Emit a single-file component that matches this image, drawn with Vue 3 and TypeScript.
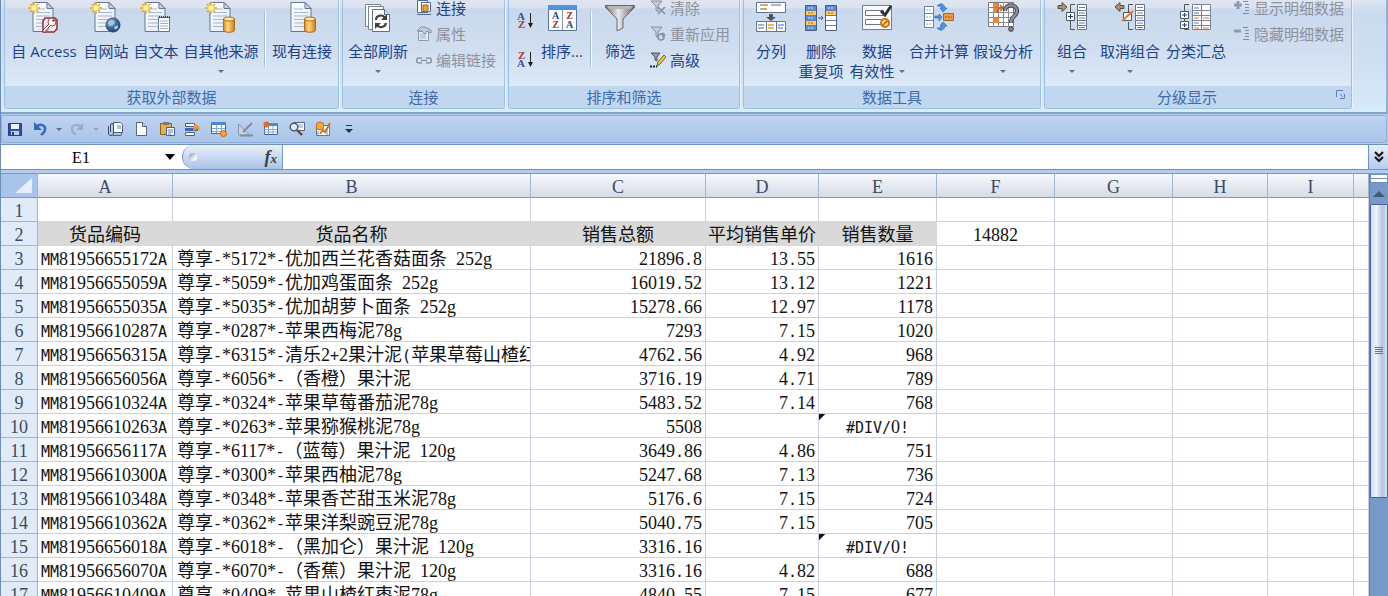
<script setup lang="ts">
import { ref } from 'vue'

interface Command {
  icon: string
  lines: string[]
  size: string
  menu?: 'inline' | 'below'
}
interface SmallCommand {
  icon: string
  label: string
  disabled?: boolean
}
type Section =
  | { kind: 'big'; items: Command[] }
  | { kind: 'small'; items: SmallCommand[] }
  | { kind: 'icons'; items: { icon: string; label: string }[] }
  | { kind: 'rule' }
interface Group {
  id: string
  title: string
  launcher?: boolean
  sections: Section[]
}

const groups: Group[] = [
  {
    id: 'external',
    title: '获取外部数据',
    sections: [
      {
        kind: 'big',
        items: [
          { icon: 'access', lines: ['自 Access'], size: 'w74' },
          { icon: 'web', lines: ['自网站'], size: 'w50' },
          { icon: 'text', lines: ['自文本'], size: 'w50' },
          { icon: 'source', lines: ['自其他来源'], size: 'w80', menu: 'below' },
        ],
      },
      { kind: 'rule' },
      { kind: 'big', items: [{ icon: 'existing', lines: ['现有连接'], size: 'w66' }] },
    ],
  },
  {
    id: 'connect',
    title: '连接',
    sections: [
      { kind: 'big', items: [{ icon: 'refresh', lines: ['全部刷新'], size: 'w66', menu: 'below' }] },
      {
        kind: 'small',
        items: [
          { icon: 'conn', label: '连接' },
          { icon: 'props', label: '属性', disabled: true },
          { icon: 'links', label: '编辑链接', disabled: true },
        ],
      },
    ],
  },
  {
    id: 'sort',
    title: '排序和筛选',
    sections: [
      {
        kind: 'icons',
        items: [
          { icon: 'asc', label: '升序' },
          { icon: 'desc', label: '降序' },
        ],
      },
      { kind: 'big', items: [{ icon: 'sort', lines: ['排序...'], size: 'w50' }] },
      { kind: 'rule' },
      { kind: 'big', items: [{ icon: 'filter', lines: ['筛选'], size: 'w50' }] },
      {
        kind: 'small',
        items: [
          { icon: 'clear', label: '清除', disabled: true },
          { icon: 'reapply', label: '重新应用', disabled: true },
          { icon: 'advanced', label: '高级' },
        ],
      },
    ],
  },
  {
    id: 'tools',
    title: '数据工具',
    sections: [
      {
        kind: 'big',
        items: [
          { icon: 'columns', lines: ['分列'], size: 'w50' },
          { icon: 'dedupe', lines: ['删除', '重复项'], size: 'w50' },
          { icon: 'valid', lines: ['数据', '有效性'], size: 'w62', menu: 'inline' },
          { icon: 'merge', lines: ['合并计算'], size: 'w62' },
          { icon: 'whatif', lines: ['假设分析'], size: 'w66', menu: 'below' },
        ],
      },
    ],
  },
  {
    id: 'outline',
    title: '分级显示',
    launcher: true,
    sections: [
      {
        kind: 'big',
        items: [
          { icon: 'group', lines: ['组合'], size: 'w50', menu: 'below' },
          { icon: 'ungroup', lines: ['取消组合'], size: 'w66', menu: 'below' },
          { icon: 'subtotal', lines: ['分类汇总'], size: 'w66' },
        ],
      },
      {
        kind: 'small',
        items: [
          { icon: 'show', label: '显示明细数据', disabled: true },
          { icon: 'hide', label: '隐藏明细数据', disabled: true },
        ],
      },
    ],
  },
]

const quick = [
  { icon: 'q-mail', label: '电子邮件' },
  { icon: 'q-new', label: '新建' },
  { icon: 'q-paste', label: '粘贴' },
  { icon: 'q-insert', label: '插入行' },
  { icon: 'q-table', label: '表格' },
  { icon: 'q-design', label: '设计模式' },
  { icon: 'q-pivot', label: '数据透视表' },
  { icon: 'q-preview', label: '打印预览' },
  { icon: 'q-chart', label: '照相机' },
]

const letters = ['A', 'B', 'C', 'D', 'E', 'F', 'G', 'H', 'I', '']
const titles = ['货品编码', '货品名称', '销售总额', '平均销售单价', '销售数量']

const data: string[][] = [
  ['MM81956655172A', '尊享-*5172*-优加西兰花香菇面条 252g', '21896.8', '13.55', '1616'],
  ['MM81956655059A', '尊享-*5059*-优加鸡蛋面条 252g', '16019.52', '13.12', '1221'],
  ['MM81956655035A', '尊享-*5035*-优加胡萝卜面条 252g', '15278.66', '12.97', '1178'],
  ['MM81956610287A', '尊享-*0287*-苹果西梅泥78g', '7293', '7.15', '1020'],
  ['MM81956656315A', '尊享-*6315*-清乐2+2果汁泥(苹果草莓山楂红', '4762.56', '4.92', '968'],
  ['MM81956656056A', '尊享-*6056*-（香橙）果汁泥', '3716.19', '4.71', '789'],
  ['MM81956610324A', '尊享-*0324*-苹果草莓番茄泥78g', '5483.52', '7.14', '768'],
  ['MM81956610263A', '尊享-*0263*-苹果猕猴桃泥78g', '5508', '', '#DIV/0!'],
  ['MM81956656117A', '尊享-*6117*-（蓝莓）果汁泥 120g', '3649.86', '4.86', '751'],
  ['MM81956610300A', '尊享-*0300*-苹果西柚泥78g', '5247.68', '7.13', '736'],
  ['MM81956610348A', '尊享-*0348*-苹果香芒甜玉米泥78g', '5176.6', '7.15', '724'],
  ['MM81956610362A', '尊享-*0362*-苹果洋梨豌豆泥78g', '5040.75', '7.15', '705'],
  ['MM81956656018A', '尊享-*6018*-（黑加仑）果汁泥 120g', '3316.16', '', '#DIV/0!'],
  ['MM81956656070A', '尊享-*6070*-（香蕉）果汁泥 120g', '3316.16', '4.82', '688'],
  ['MM81956610409A', '尊享-*0409*-苹果山楂红枣泥78g', '4840.55', '7.15', '677'],
]

interface Run {
  text: string
  face: 'num' | 'mono' | 'han'
}

// Every half-width character takes half of a full-width one, whichever face draws it.
function runs(text: string): Run[] {
  const out: Run[] = []
  for (const ch of text) {
    const face = /[0-9*g]/.test(ch) ? 'num' : ch.charCodeAt(0) < 128 ? 'mono' : 'han'
    const last = out[out.length - 1]
    if (last && last.face === face) last.text += ch
    else out.push({ text: ch, face })
  }
  return out
}

const cellName = ref('E1')
const formula = ref('')
</script>

<template>
  <svg class="defs" width="0" height="0" aria-hidden="true">
    <defs>
      <linearGradient id="g-db" x1="0" x2="1" y1="0" y2="0">
        <stop offset="0" stop-color="#d98a1c" /><stop offset=".4" stop-color="#ffd98a" /><stop offset="1" stop-color="#d07a10" />
      </linearGradient>
      <linearGradient id="g-steel" x1="0" x2="1" y1="0" y2="0">
        <stop offset="0" stop-color="#6f6f72" /><stop offset=".45" stop-color="#e8e8ea" /><stop offset="1" stop-color="#66666a" />
      </linearGradient>
      <radialGradient id="g-globe" cx=".35" cy=".3" r=".8">
        <stop offset="0" stop-color="#a8cdf0" /><stop offset=".5" stop-color="#3e6ca8" /><stop offset="1" stop-color="#18304f" />
      </radialGradient>
      <linearGradient id="g-page" x1="0" x2="1" y1="0" y2="1">
        <stop offset="0" stop-color="#fff" /><stop offset="1" stop-color="#dfe8f4" />
      </linearGradient>

      <symbol id="page" viewBox="0 0 32 32">
        <path d="M5 .5h14l6 6v23H5z" fill="url(#g-page)" stroke="#66788f" />
        <path d="M19 .5v6h6z" fill="#c8d4e4" stroke="#66788f" />
        <path d="M8 7h9M8 10.500h14M8 14h14M8 17.500h14M8 21h14M8 24.500h14" stroke="#a7b8cf" />
      </symbol>
      <symbol id="spark" viewBox="0 0 32 32">
        <path d="M6 0v12M0 6h12M2 2l8 8M10 2l-8 8" stroke="#e5a91d" stroke-width="1.600" />
        <circle cx="6" cy="6" r="3.200" fill="#fff4a8" stroke="#f0c840" />
      </symbol>
      <symbol id="drum" viewBox="0 0 32 32">
        <path d="M18.500 17v11c0 3 11 3 11 0V17z" fill="url(#g-db)" stroke="#b06c12" />
        <ellipse cx="24" cy="17" rx="5.500" ry="2" fill="#ffe3a0" stroke="#b06c12" />
      </symbol>

      <symbol id="i-access" viewBox="0 0 32 32">
        <use href="#page" width="32" height="32" /><use href="#spark" width="32" height="32" />
        <path d="M17 16h10l2 2v9l-3 3H15v-11z" fill="#f7e9ea" stroke="#8e3038" stroke-width="1.500" />
        <circle cx="24" cy="20" r="4" fill="#fff" stroke="#a04850" /><circle cx="25.500" cy="18.500" r="1.200" fill="#8e3038" />
        <path d="M21 22l-6 6v2h3v-2h2v-2l3-3" fill="#fff" stroke="#983840" />
      </symbol>
      <symbol id="i-web" viewBox="0 0 32 32">
        <use href="#page" width="32" height="32" /><use href="#spark" width="32" height="32" />
        <circle cx="23" cy="23" r="7" fill="url(#g-globe)" stroke="#334c6c" />
        <path d="M18 20l4-2 3 2-2 3-4 1zM24 25l4-2v3l-3 2z" fill="#a9c6d8" />
      </symbol>
      <symbol id="i-text" viewBox="0 0 32 32">
        <use href="#page" width="32" height="32" /><use href="#spark" width="32" height="32" />
        <path d="M18.500 15.500h11v14h-11z" fill="#fff" stroke="#64748b" />
        <path d="M19 15h11" stroke="#38475c" stroke-width="2" stroke-dasharray="1 1" />
        <path d="M20 19h8M20 21.500h8M20 24h8M20 26.500h8" stroke="#9ab0cb" />
      </symbol>
      <symbol id="i-source" viewBox="0 0 32 32">
        <use href="#page" width="32" height="32" /><use href="#spark" width="32" height="32" /><use href="#drum" width="32" height="32" />
      </symbol>
      <symbol id="i-existing" viewBox="0 0 32 32">
        <use href="#page" width="32" height="32" /><use href="#drum" width="32" height="32" />
      </symbol>
      <symbol id="i-refresh" viewBox="0 0 32 32">
        <path d="M3.500 2.500h15v22h-15z" fill="#fff" stroke="#7b8490" />
        <path d="M6.500 4.500h15v23h-15z" fill="#fff" stroke="#7b8490" />
        <path d="M10.500 7.500h12l5 5v17h-17z" fill="#fff" stroke="#666e79" />
        <path d="M22.500 7.500v5h5" fill="#dce2ea" stroke="#666e79" />
        <path d="M14 18c0-5 7-6 9-2M24 21c-1 5-7 5-9 2" fill="none" stroke="#3c4248" stroke-width="2.200" />
        <path d="M25 12v6h-6zM13 27v-6h6z" fill="#3c4248" />
      </symbol>
      <symbol id="i-sort" viewBox="0 0 32 32">
        <path d="M2.500 3.500h28v25h-28z" fill="#fff" stroke="#5b7398" />
        <path d="M2 3h29v5H2z" fill="#4f92df" /><path d="M16.500 8v20" stroke="#7f93ae" />
        <g font-family="Liberation Serif, serif" font-size="10" font-weight="700" text-anchor="middle">
          <text x="9.500" y="17" fill="#27469a">A</text><text x="9.500" y="26" fill="#96382e">Z</text>
          <text x="23.500" y="17" fill="#96382e">Z</text><text x="23.500" y="26" fill="#27469a">A</text>
        </g>
      </symbol>
      <symbol id="i-filter" viewBox="0 0 32 32">
        <path d="M1.500 3.500h29v2L19 17v9l-6 3V17L1.500 5.500z" fill="url(#g-steel)" stroke="#6a6a6e" />
        <path d="M3 4h26l-3 3H6z" fill="#b8b8bb" />
      </symbol>
      <symbol id="i-columns" viewBox="0 0 32 32">
        <path d="M1.500.5h29v10h-29zM1.500 19.500h29v10h-29z" fill="#fff" stroke="#687587" />
        <path d="M11.500 20v9M21.500 20v9" stroke="#687587" />
        <path d="M5 3h7M16 3h10M5 7h7M3 23h6M3 26h6M23 23h6M23 26h5" stroke="#3f68ac" />
        <path d="M9 3h4M7 7h5M13 23h6M13 26h6" stroke="#e79a36" stroke-width="1.500" />
        <path d="M14 12h4v3h3l-5 4-5-4h3z" fill="#4e545c" />
      </symbol>
      <symbol id="i-dedupe" viewBox="0 0 32 32">
        <path d="M.5 3.500h11v25H.5z" fill="#5b8bd6" stroke="#4a5d80" />
        <path d="M20.500 3.500h11v25h-11z" fill="#fff" stroke="#4a5d80" />
        <path d="M21 4h10v5H21z" fill="#5b8bd6" />
        <path d="M1 9h10v5H1zM1 19h10v5H1zM21 9h10v5H21z" fill="#ffca62" />
        <path d="M1 8.500h10M1 13.500h10M1 18.500h10M1 23.500h10M21 8.500h10M21 13.500h10M21 18.500h10M21 23.500h10" stroke="#6a7e9f" />
        <path d="M3 6h6M3 16h6M3 26h6M23 6h6" stroke="#dce9ff" stroke-dasharray="2 1" />
        <path d="M3 11h6M3 21h6M23 11h6" stroke="#a36b1c" stroke-dasharray="2 1" />
        <path d="M13 16h5M16 14l2 2-2 2" fill="none" stroke="#365b95" />
      </symbol>
      <symbol id="i-valid" viewBox="0 0 32 32">
        <path d="M1.500 3.500h29v24h-29z" fill="#f8f9fb" stroke="#747d8a" />
        <path d="M4.500 8.500h18v5h-18zM4.500 17.500h16v5h-16z" fill="#fff" stroke="#66778d" />
        <path d="M20 9l4 4 6-9" fill="none" stroke="#30343a" stroke-width="3" />
        <circle cx="24" cy="21" r="4" fill="#ffe2b5" stroke="#d2740e" stroke-width="2" />
        <path d="M21 24l6-6" stroke="#d2740e" stroke-width="2" />
      </symbol>
      <symbol id="i-merge" viewBox="0 0 32 32">
        <path d="M1.500 4.500h9v21h-9zM1 11.500h10M1 18.500h10" fill="#fff" stroke="#6f8097" />
        <path d="M3 8h6M3 15h6M3 22h6" stroke="#8aa8d2" stroke-dasharray="2 1" />
        <path d="M20.500 11.500h10v7h-10z" fill="#f09a42" stroke="#a9632a" /><path d="M22 15h7" stroke="#a45418" stroke-dasharray="2 1" />
        <path d="M14 4c4-4 7-2 8 2h2l-4 4-3-4h2c-1-2-3-2-5-2zM14 26c4 4 7 2 8-2h2l-4-4-3 4h2c-1 2-3 2-5 2zM12 14h4v-2l3 3-3 4v-3h-4z" fill="#4c94e6" stroke="#2b66b2" stroke-width=".700" />
      </symbol>
      <symbol id="i-whatif" viewBox="0 0 32 32">
        <path d="M1.500.5h25v24h-25z" fill="#fff" stroke="#76787d" />
        <path d="M6.500 0v25M11.500 0v25M16.500 0v25M21.500 0v25M1 5.500h25M1 10.500h25M1 15.500h25M1 20.500h25" stroke="#8a8c91" />
        <path d="M6 1h5v4H6zM6 6h5v4H6zM6 16h6v5H6z" fill="#ed8a35" />
        <path d="M10 11c0-4 3-6 6-5M13 3l3 3-3 3" fill="none" stroke="#c45c15" stroke-width="1.500" />
        <path d="M18 9c0-8 12-7 12 0 0 5-6 5-6 12" fill="none" stroke="#3f464e" stroke-width="4.200" />
        <path d="M18 9c0-8 12-7 12 0 0 5-6 5-6 12" fill="none" stroke="#8c969f" stroke-width="2.200" />
        <circle cx="24" cy="27" r="2.400" fill="#7d8790" stroke="#3f464e" />
      </symbol>
      <symbol id="rows" viewBox="0 0 32 32">
        <path d="M21.500 2.500h9v25h-9zM21 8.500h10M21 13.500h10M21 18.500h10M21 23.500h10" fill="#fff" stroke="#687385" />
        <path d="M23 5.500h6M23 11h6M23 16h6M23 21h6M23 25.500h6" stroke="#5686c8" />
      </symbol>
      <symbol id="i-group" viewBox="0 0 32 32">
        <use href="#rows" width="32" height="32" />
        <path d="M19 2.500h-4.500V11M14.500 18v9.500H19" fill="none" stroke="#555" />
        <path d="M2 3.500h4V.5L11 5 6 9.500v-3H2z" fill="#a8957c" stroke="#5b4c3b" />
        <path d="M10.500 10.500h8v8h-8z" fill="#fff" stroke="#4c5766" /><path d="M12 14.500h5M14.500 12v5" stroke="#24426f" />
      </symbol>
      <symbol id="i-ungroup" viewBox="0 0 32 32">
        <use href="#rows" width="32" height="32" />
        <path d="M19 2.500h-4.500V10M14.500 20v7.500H19" fill="none" stroke="#555" />
        <path d="M10 3.500H6V.5L1 5l5 4.500v-3h4z" fill="#a8957c" stroke="#5b4c3b" />
        <path d="M9.500 10.500h8v8h-8z" fill="#fff" stroke="#4c5766" /><path d="M8 19L19 9" stroke="#e8792d" stroke-width="2" />
      </symbol>
      <symbol id="i-subtotal" viewBox="0 0 32 32">
        <path d="M12.500 2.500h18v25h-18zM12 8.500h19M12 13.500h19M12 18.500h19M12 23.500h19M21.500 2v26" fill="#fff" stroke="#76839a" />
        <path d="M14 6h5M14 11h5M14 21h5" stroke="#4d7fc5" /><path d="M14 16h5M23 16h6M14 26h5M23 26h6" stroke="#e8792d" />
        <path d="M9 2.500H4.500v25H9" fill="none" stroke="#555" />
        <path d="M.5 9.500h8v7h-8zM.5 19.500h8v7h-8z" fill="#fff" stroke="#4c5766" /><path d="M2 13h5M4.500 11v4M2 23h5M4.500 21v4" stroke="#24426f" />
      </symbol>

      <symbol id="i-conn" viewBox="0 0 16 16">
        <path d="M1.500.5h10v12h-10z" fill="#fff" stroke="#526b90" /><path d="M5.500 2.500h9v9h-9z" fill="#fff" stroke="#526b90" />
        <path d="M7 5v5c0 2 5 2 5 0V5z" fill="#f0a238" stroke="#a8600f" /><path d="M1 14.500h14" stroke="#526b90" />
      </symbol>
      <symbol id="i-props" viewBox="0 0 16 16">
        <path d="M2.500 5.500h10v9h-10z" fill="#e5eaf1" stroke="#8c9bb0" /><path d="M4 8h6M4 10h6M4 12h6" stroke="#a6b3c4" />
        <path d="M1 5l4-4h4l6 3v3l-4-2-2 3-3-3z" fill="#c2ccd9" stroke="#8191a8" />
      </symbol>
      <symbol id="i-links" viewBox="0 0 16 16">
        <path d="M6 6H3a2.500 2.500 0 0 0 0 5h3M10 6h3a2.500 2.500 0 0 1 0 5h-3M5 8.500h6" fill="none" stroke="#8b96a6" stroke-width="1.500" />
      </symbol>
      <symbol id="i-asc" viewBox="0 0 18 18">
        <g font-family="Liberation Serif, serif" font-size="11" font-weight="700">
          <text x="0" y="9" fill="#3250a0">A</text><text x="1" y="17" fill="#a03c34">Z</text>
        </g>
        <path d="M13.500 2v13" stroke="#222" /><path d="M11 12h5l-2.500 5z" fill="#222" />
      </symbol>
      <symbol id="i-desc" viewBox="0 0 18 18">
        <g font-family="Liberation Serif, serif" font-size="11" font-weight="700">
          <text x="1" y="9" fill="#a03c34">Z</text><text x="0" y="17" fill="#3250a0">A</text>
        </g>
        <path d="M13.500 2v13" stroke="#222" /><path d="M11 12h5l-2.500 5z" fill="#222" />
      </symbol>
      <symbol id="i-clear" viewBox="0 0 16 16">
        <path d="M1 1h11L8 6v6l-2-2V6z" fill="#c3ccd8" stroke="#8591a2" /><path d="M8 7l7 7M15 7l-7 7" stroke="#8591a2" stroke-width="1.600" />
      </symbol>
      <symbol id="i-reapply" viewBox="0 0 16 16">
        <path d="M1 1h11L8 6v6l-2-2V6z" fill="#c3ccd8" stroke="#8591a2" />
        <circle cx="11" cy="11" r="3" fill="none" stroke="#8591a2" stroke-width="1.600" /><path d="M12 6l4 3-4 2z" fill="#8591a2" />
      </symbol>
      <symbol id="i-advanced" viewBox="0 0 16 16">
        <path d="M1 1h9L7 5v4L5 8V5z" fill="#9b9b9f" stroke="#55565a" /><path d="M0 14.500h7" stroke="#222" stroke-width="2" stroke-dasharray="2 1" />
        <path d="M7 14l1-4 6-7 2 2-6 7z" fill="#f5c84c" stroke="#7a5a18" />
      </symbol>
      <symbol id="i-show" viewBox="0 0 16 16">
        <path d="M4 1v8M0 5h8" stroke="#8c9cb3" stroke-width="3" /><path d="M9 1.500h5M11 4.500h4M11 7.500h4M11 10.500h4M9 13.500h6" stroke="#7d8ca3" />
      </symbol>
      <symbol id="i-hide" viewBox="0 0 16 16">
        <path d="M0 5h7" stroke="#8c9cb3" stroke-width="3" /><path d="M9 1.500h5M11 4.500h4M11 7.500h4M11 10.500h4M9 13.500h6" stroke="#7d8ca3" />
      </symbol>

      <symbol id="i-q-save" viewBox="0 0 16 16">
        <path d="M1.500 2.500h13v12h-13z" fill="#344fa6" stroke="#263c85" /><path d="M4 3h8v5H4z" fill="#eef4ff" /><path d="M4 10h8v4H4z" fill="#c3cfe5" /><path d="M5 11h2v3H5z" fill="#26387a" />
      </symbol>
      <symbol id="i-q-undo" viewBox="0 0 16 16">
        <path d="M4 6c4-4 10-2 9 3-.500 3-3 4-4 5" fill="none" stroke="#3566bd" stroke-width="2.400" /><path d="M2 1v8h8z" fill="#3566bd" />
      </symbol>
      <symbol id="i-q-redo" viewBox="0 0 16 16">
        <path d="M12 6C8 2 2 4 3 9c.500 3 3 4 4 5" fill="none" stroke="#98abc8" stroke-width="2" /><path d="M14 2v7H7z" fill="#98abc8" />
      </symbol>
      <symbol id="i-q-mail" viewBox="0 0 16 16">
        <path d="M6.500 1.500h7l2 2v8h-9z" fill="#fff" stroke="#4f617c" /><path d="M10 5h4M10 7h4" stroke="#6b84a9" />
        <path d="M1.500 5v7a2 2 0 0 0 5 0V4a1.500 1.500 0 0 0-3 0v7" fill="none" stroke="#3e4b60" /><path d="M6 14.500h8l1-3" fill="none" stroke="#4f617c" />
      </symbol>
      <symbol id="i-q-new" viewBox="0 0 16 16"><path d="M3.500 1.500h6l4 4v9h-10z" fill="#fff" stroke="#53657f" /><path d="M9.500 1.500v4h4" fill="#cbd7e8" stroke="#53657f" /></symbol>
      <symbol id="i-q-paste" viewBox="0 0 16 16">
        <path d="M1.500 2.500h11v11h-11z" fill="#edac4b" stroke="#8c5f1c" /><path d="M4 1h6v3H4z" fill="#75797f" />
        <path d="M7.500 6.500h8v8h-8z" fill="#fff" stroke="#4e6180" /><path d="M9 9h5M9 11h5M9 13h3" stroke="#5b83bc" />
      </symbol>
      <symbol id="i-q-insert" viewBox="0 0 16 16">
        <path d="M.5 2.500h9v3h-9zM.5 11.500h9v3h-9z" fill="#fff" stroke="#4b5f82" /><path d="M0 7h13v3H0z" fill="#3f68b6" /><path d="M9 4l3-1 4 6-4-1-4 2z" fill="#f09336" />
      </symbol>
      <symbol id="i-q-table" viewBox="0 0 16 16">
        <path d="M.5 1.500h14v11H.5z" fill="#fff" stroke="#42659f" /><path d="M0 1h15v3H0z" fill="#4e86d4" /><path d="M1 7.500h13M1 10.500h13M5.500 4v8M10.500 4v8" stroke="#84a4d1" />
        <circle cx="12.500" cy="12.500" r="3" fill="#f2a541" stroke="#b3691a" />
      </symbol>
      <symbol id="i-q-design" viewBox="0 0 16 16"><path d="M1.500 3v11h11z" fill="#c8d3e2" stroke="#8494ab" /><path d="M6 11l9-9M3 14.500h13" stroke="#7d8da6" stroke-width="2" /></symbol>
      <symbol id="i-q-pivot" viewBox="0 0 16 16">
        <path d="M1.500 2.500h13v11h-13z" fill="#fff" stroke="#42659f" /><path d="M5 2h10v3H5z" fill="#4e86d4" /><path d="M1 8.500h13M1 11h13M5.500 5v8M10 5v8" stroke="#84a4d1" /><circle cx="3.500" cy="3.500" r="3" fill="#dc6b2d" />
      </symbol>
      <symbol id="i-q-preview" viewBox="0 0 16 16">
        <path d="M4.500 1.500h11v8h-11z" fill="#fff" stroke="#5a6880" /><path d="M9 4h5M9 6h5" stroke="#8ba0be" /><circle cx="5" cy="6" r="3.800" fill="#d9ebfb" stroke="#4d5967" stroke-width="1.400" /><path d="M8 9l5 5" stroke="#5c4a36" stroke-width="2.400" />
      </symbol>
      <symbol id="i-q-chart" viewBox="0 0 16 16">
        <path d="M1.500 4.500h13v10h-13z" fill="#fff" stroke="#6a7688" /><circle cx="5" cy="5" r="4" fill="#f4a93c" stroke="#b5701a" /><path d="M5 13l3-4 2 2 5-9" fill="none" stroke="#c67b28" stroke-width="2" /><path d="M3 10v4M12 8v6" stroke="#6e8ab5" />
      </symbol>
    </defs>
  </svg>

  <main class="window">
    <section class="ribbon" aria-label="数据">
      <div v-for="g in groups" :key="g.id" class="group" :class="'group-' + g.id">
        <div class="body">
          <template v-for="(s, i) in g.sections" :key="i">
            <span v-if="s.kind === 'rule'" class="rule"></span>
            <template v-else-if="s.kind === 'big'">
              <button v-for="c in s.items" :key="c.icon" type="button" class="big" :class="c.size">
                <svg class="ic32" width="32" height="32" aria-hidden="true"><use :href="'#i-' + c.icon" /></svg>
                <span v-for="(line, n) in c.lines" :key="line" class="line">{{ line }}<i v-if="c.menu === 'inline' && n === c.lines.length - 1" class="caret after"></i></span>
                <span v-if="c.menu === 'below'" class="line"><i class="caret"></i></span>
              </button>
            </template>
            <div v-else-if="s.kind === 'small'" class="stack">
              <button v-for="c in s.items" :key="c.icon" type="button" class="small" :disabled="c.disabled">
                <svg width="16" height="16" aria-hidden="true"><use :href="'#i-' + c.icon" /></svg>{{ c.label }}
              </button>
            </div>
            <div v-else class="sorts">
              <button v-for="c in s.items" :key="c.icon" type="button" :aria-label="c.label">
                <svg width="18" height="18" aria-hidden="true"><use :href="'#i-' + c.icon" /></svg>
              </button>
            </div>
          </template>
        </div>
        <div class="title" :class="{ launches: g.launcher }">
          {{ g.title }}
          <button v-if="g.launcher" type="button" class="launcher" aria-label="分级显示设置">
            <svg width="9" height="9" viewBox="0 0 9 9" aria-hidden="true"><path d="M.5 7V.5H7M4 4l3 3M8.500 4v4.500H4" fill="none" stroke="#5c83b8" /></svg>
          </button>
        </div>
      </div>
    </section>

    <nav class="quick" aria-label="快速访问工具栏">
      <button type="button" class="tool" aria-label="保存"><svg width="16" height="16"><use href="#i-q-save" /></svg></button>
      <button type="button" class="tool step" aria-label="撤消"><svg width="16" height="16"><use href="#i-q-undo" /></svg></button>
      <button type="button" class="drop" aria-label="撤消列表"><i class="caret"></i></button>
      <button type="button" class="tool step" aria-label="恢复" disabled><svg width="16" height="16"><use href="#i-q-redo" /></svg></button>
      <button type="button" class="drop" aria-label="恢复列表" disabled><i class="caret"></i></button>
      <button v-for="q in quick" :key="q.icon" type="button" class="tool" :aria-label="q.label">
        <svg width="16" height="16"><use :href="'#i-' + q.icon" /></svg>
      </button>
      <button type="button" class="tool" aria-label="自定义">
        <svg width="8" height="10" viewBox="0 0 8 10"><path d="M1 1.500h6" stroke="#1c3567" /><path d="M0 5h8L4 9z" fill="#1c3567" /></svg>
      </button>
    </nav>

    <div class="formula">
      <div class="namebox">
        <input v-model="cellName" type="text" aria-label="名称框" />
        <button type="button" aria-label="名称列表"><svg width="10" height="6" viewBox="0 0 10 6"><path d="M0 0h10L5 6z" /></svg></button>
      </div>
      <div class="fx">
        <span class="knob"></span>
        <button type="button" aria-label="插入函数"><span class="f">f</span><span class="x">x</span></button>
      </div>
      <input v-model="formula" class="entry" type="text" aria-label="编辑栏" />
      <button type="button" class="expand" aria-label="展开编辑栏">
        <svg width="10" height="12" viewBox="0 0 10 12"><path d="M1 1l4 4 4-4M1 6l4 4 4-4" fill="none" stroke="#111" stroke-width="2" /></svg>
      </button>
    </div>

    <div class="sheet">
      <div class="gridwrap">
        <table>
          <colgroup>
            <col class="c-n" /><col class="c-a" /><col class="c-b" /><col class="c-c" /><col class="c-d" /><col class="c-e" /><col class="c-e" /><col class="c-e" /><col class="c-h" /><col class="c-i" /><col />
          </colgroup>
          <thead>
            <tr>
              <th class="corner"><svg width="18" height="16" viewBox="0 0 18 16" aria-hidden="true"><path d="M17 0v15H0z" fill="#e6eefa" /></svg></th>
              <th v-for="l in letters" :key="l" scope="col">{{ l }}</th>
            </tr>
          </thead>
          <tbody>
            <tr class="first">
              <th scope="row">1</th>
              <td v-for="l in letters" :key="l"></td>
            </tr>
            <tr>
              <th scope="row">2</th>
              <td v-for="t in titles" :key="t" class="head"><span class="han">{{ t }}</span></td>
              <td class="mid"><span class="num">14882</span></td>
              <td v-for="n in 4" :key="n"></td>
            </tr>
            <tr v-for="(row, r) in data" :key="row[0]">
              <th scope="row">{{ r + 3 }}</th>
              <td v-for="(v, c) in row" :key="c" :class="{ name: c === 1, right: c > 1, error: v.startsWith('#') }"><span v-for="(run, k) in runs(v)" :key="k" :class="run.face">{{ run.text }}</span></td>
              <td v-for="n in 5" :key="'e' + n"></td>
            </tr>
          </tbody>
        </table>
      </div>
      <div class="scroll">
        <span class="split"></span>
        <button type="button" class="up" aria-label="向上滚动"><svg width="12" height="6" viewBox="0 0 12 6"><path d="M6 0l6 6H0z" fill="#3f5878" /></svg></button>
        <div class="track"><div class="thumb"><span class="grip"></span></div></div>
      </div>
    </div>
  </main>
</template>

<style>
body {
  margin: 0;
  background: #fff;
}
</style>

<style scoped>
* {
  box-sizing: border-box;
}
button,
input {
  margin: 0;
  padding: 0;
  border: 0;
  background: none;
  font: inherit;
  color: inherit;
}
svg {
  display: block;
  flex: none;
}
.defs {
  position: absolute;
}
.window {
  display: flex;
  flex-direction: column;
  height: 100vh;
  overflow: hidden;
  background: #b4cdee;
  border-left: 1px solid #6d8db5;
  font-family: "Open Sans", "Noto Sans CJK SC", sans-serif;
  font-size: 15px;
  color: #1e4289;
}

.ribbon {
  flex: none;
  display: flex;
  gap: 3px;
  padding: 0 3px 3px;
  border-right: 2px solid #8fb1dc;
  border-bottom: 2px solid #82a5c4;
  background: linear-gradient(#dde6f3 0, #cbdaee 12px, #cfdff2 60px, #d5e9f9 104px, #d2f0fa 100%);
}
.group {
  flex: none;
  border: 1px solid #9fbfe2;
  border-top: 0;
  border-radius: 0 0 3px 3px;
  box-shadow: 1px 0 0 #eaf3fc;
  background: linear-gradient(#dfe6f2 0, #d9e2f0 8px, #c9d8ec 9px, #d0def0 50px, #dce9f7 86px);
}
.group-external {
  width: 335px;
}
.group-connect {
  width: 163px;
}
.group-sort {
  width: 232px;
}
.group-tools {
  width: 298px;
}
.group-outline {
  width: 308px;
}
.body {
  display: flex;
  height: 86px;
  padding: 0 2px;
}
.title {
  display: flex;
  position: relative;
  justify-content: center;
  height: 22px;
  background: #c1d7f0;
  line-height: 22px;
  color: #3e6aaa;
}
.launches {
  padding-right: 22px;
}
.launcher {
  position: absolute;
  right: 6px;
  top: 4px;
}
.big {
  display: flex;
  flex: none;
  flex-direction: column;
  align-items: center;
  padding-top: 2px;
  white-space: nowrap;
}
.ic32 {
  margin-bottom: 7px;
}
.line {
  display: flex;
  align-items: center;
  height: 20px;
  line-height: 20px;
}
.w50 {
  width: 50px;
}
.w62 {
  width: 62px;
}
.w66 {
  width: 66px;
}
.w74 {
  width: 74px;
}
.w80 {
  width: 80px;
}
.caret {
  border: 3px solid transparent;
  border-top-color: #5a7096;
  border-bottom: 0;
}
.after {
  margin-left: 4px;
}
.rule {
  width: 2px;
  height: 56px;
  margin: 11px 3px 0;
  border-left: 1px solid #a9c0de;
  border-right: 1px solid #f2f8fe;
}
.stack {
  display: flex;
  flex-direction: column;
  gap: 10px;
  margin-left: 5px;
}
.small {
  display: flex;
  align-items: center;
  gap: 4px;
  height: 16px;
  line-height: 16px;
  white-space: nowrap;
}
.small:disabled {
  color: #8f929d;
}
.sorts {
  display: flex;
  flex-direction: column;
  gap: 21px;
  width: 26px;
  padding: 11px 0 0 6px;
}

.quick {
  flex: none;
  display: flex;
  align-items: center;
  height: 28px;
  margin: 1px 1px 1px 0;
  border: 1px solid #8fb0dc;
  border-radius: 2px;
  background: linear-gradient(#bdd3f0, #aac5e9);
}
.tool,
.drop {
  display: flex;
  align-items: center;
  justify-content: center;
  width: 26px;
  height: 26px;
}
.step {
  width: 24px;
}
.drop {
  width: 13px;
}
.drop:disabled {
  opacity: 0.4;
}

.formula {
  flex: none;
  display: flex;
  height: 26px;
  border-top: 1px solid #6f91be;
  border-bottom: 1px solid #6f91be;
  background: #fff;
  color: #000;
}
.namebox {
  display: flex;
  width: 181px;
}
.namebox input {
  width: 160px;
  padding-top: 2px;
  text-align: center;
  font: 16px "Liberation Serif", serif;
}
.namebox button {
  padding-left: 4px;
}
.fx {
  display: flex;
  align-items: center;
  justify-content: space-between;
  width: 101px;
  padding: 0 5px 0 6px;
  border: 1px solid #7a9bc7;
  border-width: 0 1px;
  border-radius: 12px 0 0 12px;
  background: linear-gradient(#e9f0fa, #a9c4e8);
}
.knob {
  width: 8px;
  height: 8px;
  border-radius: 4px;
  background: linear-gradient(135deg, #8795a8, #f4f8fd 70%);
}
.fx button {
  font-family: "Liberation Serif", serif;
  font-style: italic;
  font-weight: 700;
  color: #3c4148;
}
.f {
  font-size: 18px;
}
.x {
  font-size: 13px;
}
.entry {
  flex: 1;
  min-width: 0;
  padding: 0 4px;
}
.expand {
  display: flex;
  align-items: center;
  justify-content: center;
  width: 20px;
  border-left: 1px solid #6f91be;
  background: linear-gradient(#e6effa, #b4ccec);
}

.sheet {
  flex: 1;
  display: flex;
  min-height: 0;
  margin-top: 3px;
  border-top: 1px solid #7c99c0;
}
.gridwrap {
  flex: 1;
  min-width: 0;
  overflow: hidden;
  background: #fff;
}
table {
  width: 100%;
  table-layout: fixed;
  border-collapse: separate;
  border-spacing: 0;
  color: #111;
}
.c-n {
  width: 37px;
}
.c-a {
  width: 135px;
}
.c-b {
  width: 358px;
}
.c-c {
  width: 175px;
}
.c-d {
  width: 113px;
}
.c-e {
  width: 118px;
}
.c-h {
  width: 95px;
}
.c-i {
  width: 86px;
}
th,
td {
  height: 24px;
  padding: 3px 0 0;
  border-right: 1px solid #c9d0de;
  border-bottom: 1px solid #c9d0de;
  font: 18px/20px "Liberation Serif", serif;
  vertical-align: top;
  white-space: nowrap;
}
th {
  border-color: #9eb6ce;
  color: #3b4c62;
}
thead th {
  border-bottom-color: #8096b5;
  background: linear-gradient(#f6f9fc, #d5dce7);
}
tbody th {
  background: #e1ebf7;
}
thead .corner {
  padding: 4px 4px 0 14px;
  background: #a9c4e9;
}
td {
  padding-left: 3px;
}
.name {
  padding-left: 4px;
  overflow-x: clip;
}
.right {
  padding-right: 3px;
  text-align: right;
}
.mid,
.head,
.error {
  padding-left: 0;
  padding-right: 0;
  text-align: center;
}
.head {
  border-color: #d9d9d9;
  background: #d9d9d9;
}
.first td:nth-child(-n + 6) {
  border-bottom-color: #d9d9d9;
}
.error {
  background: linear-gradient(135deg, #111 4px, transparent 5px) no-repeat;
}
/* The cell's own line box sets the row height, so the mixed faces add none. */
.num {
  font: 18px/0 "Liberation Serif", serif;
}
.mono {
  font: 15px/0 "DejaVu Sans Mono", monospace;
  white-space: pre;
}
.han {
  font: 18px/0 "Noto Sans CJK SC", sans-serif;
}

.scroll {
  display: flex;
  flex-direction: column;
  width: 19px;
  border-left: 1px solid #5f82b4;
  background: #7799c7;
}
.split {
  height: 9px;
  border: 1px solid #7393bf;
  background: linear-gradient(#fff 3px, #6f8fbd 3px, #6f8fbd 4px, #fff 4px);
}
.up {
  display: flex;
  align-items: center;
  justify-content: center;
  height: 21px;
}
.track {
  flex: 1;
}
.thumb {
  display: flex;
  align-items: center;
  justify-content: center;
  height: 75%;
  border: 1px solid #48649b;
  border-radius: 1px;
  background: linear-gradient(90deg, #cfe0f2, #eef4fa 35%, #b4c5dd 70%, #d3e0ef);
}
.grip {
  width: 8px;
  height: 8px;
  background: repeating-linear-gradient(#64778f 0, #64778f 1px, transparent 1px, transparent 2px);
}
</style>
